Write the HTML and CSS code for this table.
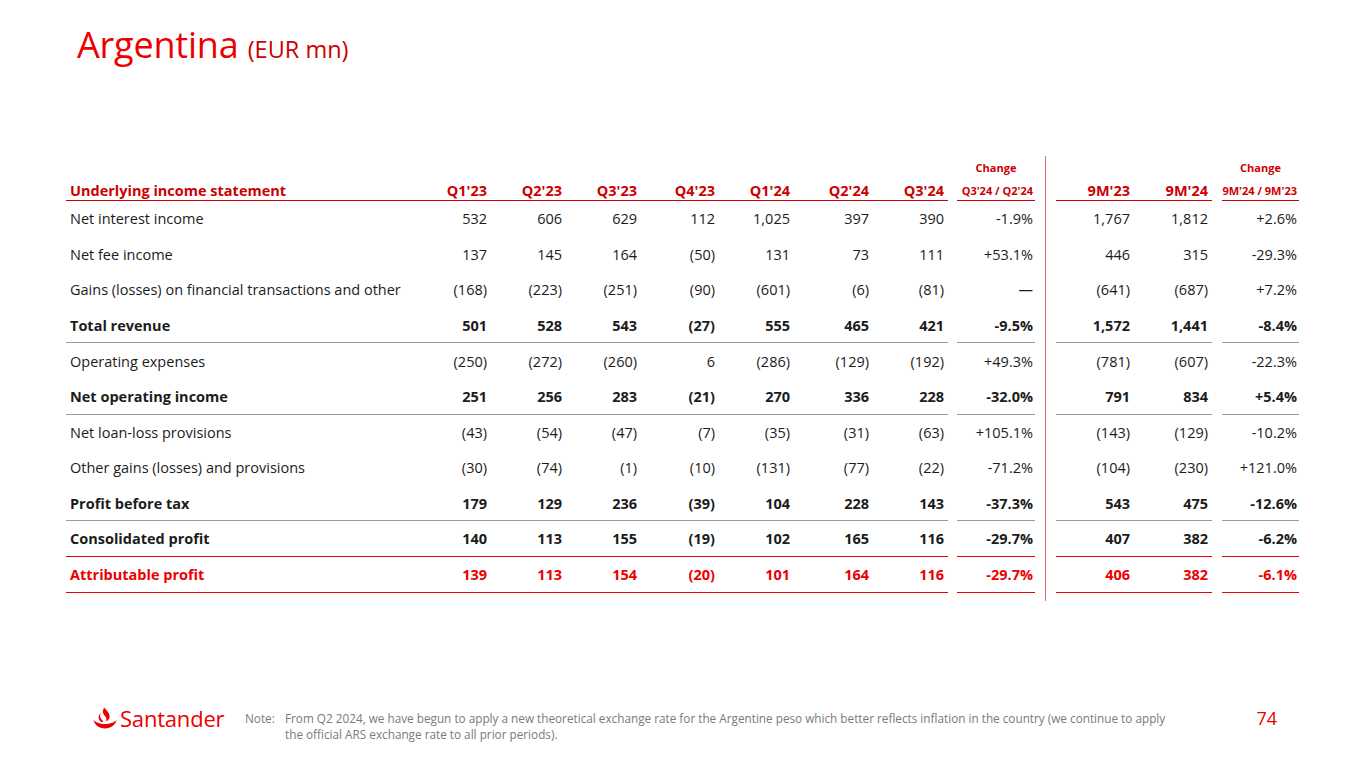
FILE: index.html
```html
<!DOCTYPE html>
<html lang="en">
<head>
<meta charset="utf-8">
<title>Argentina (EUR mn)</title>
<link rel="stylesheet" href="styles.css">
</head>
<body>
<div class="page">
  <h1 class="title">Argentina <span class="unit">(EUR mn)</span></h1>

  <div class="tbl">
    <div class="divider"></div>

    <div class="row top">
      <div class="c"></div><div class="c"></div><div class="c"></div><div class="c"></div><div class="c"></div><div class="c"></div><div class="c"></div><div class="c"></div>
      <div class="sp"></div>
      <div class="c chg ctr">Change</div>
      <div class="c"></div><div class="c"></div>
      <div class="sp"></div>
      <div class="c chg ctr">Change</div>
    </div>

    <div class="row head">
      <div class="c lbl">Underlying income statement</div>
      <div class="c">Q1'23</div><div class="c">Q2'23</div><div class="c">Q3'23</div><div class="c">Q4'23</div><div class="c">Q1'24</div><div class="c">Q2'24</div><div class="c">Q3'24</div>
      <div class="sp"></div>
      <div class="c chg sub">Q3'24 / Q2'24</div>
      <div class="c">9M'23</div><div class="c">9M'24</div>
      <div class="sp"></div>
      <div class="c chg sub">9M'24 / 9M'23</div>
    </div>

    <div class="row">
      <div class="c lbl">Net interest income</div>
      <div class="c">532</div><div class="c">606</div><div class="c">629</div><div class="c">112</div><div class="c">1,025</div><div class="c">397</div><div class="c">390</div>
      <div class="sp"></div><div class="c chg">-1.9%</div>
      <div class="c">1,767</div><div class="c">1,812</div>
      <div class="sp"></div><div class="c chg">+2.6%</div>
    </div>

    <div class="row">
      <div class="c lbl">Net fee income</div>
      <div class="c">137</div><div class="c">145</div><div class="c">164</div><div class="c">(50)</div><div class="c">131</div><div class="c">73</div><div class="c">111</div>
      <div class="sp"></div><div class="c chg">+53.1%</div>
      <div class="c">446</div><div class="c">315</div>
      <div class="sp"></div><div class="c chg">-29.3%</div>
    </div>

    <div class="row">
      <div class="c lbl">Gains (losses) on financial transactions and other</div>
      <div class="c">(168)</div><div class="c">(223)</div><div class="c">(251)</div><div class="c">(90)</div><div class="c">(601)</div><div class="c">(6)</div><div class="c">(81)</div>
      <div class="sp"></div><div class="c chg">—</div>
      <div class="c">(641)</div><div class="c">(687)</div>
      <div class="sp"></div><div class="c chg">+7.2%</div>
    </div>

    <div class="row bold line">
      <div class="c lbl">Total revenue</div>
      <div class="c">501</div><div class="c">528</div><div class="c">543</div><div class="c">(27)</div><div class="c">555</div><div class="c">465</div><div class="c">421</div>
      <div class="sp"></div><div class="c chg">-9.5%</div>
      <div class="c">1,572</div><div class="c">1,441</div>
      <div class="sp"></div><div class="c chg">-8.4%</div>
    </div>

    <div class="row">
      <div class="c lbl">Operating expenses</div>
      <div class="c">(250)</div><div class="c">(272)</div><div class="c">(260)</div><div class="c">6</div><div class="c">(286)</div><div class="c">(129)</div><div class="c">(192)</div>
      <div class="sp"></div><div class="c chg">+49.3%</div>
      <div class="c">(781)</div><div class="c">(607)</div>
      <div class="sp"></div><div class="c chg">-22.3%</div>
    </div>

    <div class="row bold line">
      <div class="c lbl">Net operating income</div>
      <div class="c">251</div><div class="c">256</div><div class="c">283</div><div class="c">(21)</div><div class="c">270</div><div class="c">336</div><div class="c">228</div>
      <div class="sp"></div><div class="c chg">-32.0%</div>
      <div class="c">791</div><div class="c">834</div>
      <div class="sp"></div><div class="c chg">+5.4%</div>
    </div>

    <div class="row">
      <div class="c lbl">Net loan-loss provisions</div>
      <div class="c">(43)</div><div class="c">(54)</div><div class="c">(47)</div><div class="c">(7)</div><div class="c">(35)</div><div class="c">(31)</div><div class="c">(63)</div>
      <div class="sp"></div><div class="c chg">+105.1%</div>
      <div class="c">(143)</div><div class="c">(129)</div>
      <div class="sp"></div><div class="c chg">-10.2%</div>
    </div>

    <div class="row">
      <div class="c lbl">Other gains (losses) and provisions</div>
      <div class="c">(30)</div><div class="c">(74)</div><div class="c">(1)</div><div class="c">(10)</div><div class="c">(131)</div><div class="c">(77)</div><div class="c">(22)</div>
      <div class="sp"></div><div class="c chg">-71.2%</div>
      <div class="c">(104)</div><div class="c">(230)</div>
      <div class="sp"></div><div class="c chg">+121.0%</div>
    </div>

    <div class="row bold line">
      <div class="c lbl">Profit before tax</div>
      <div class="c">179</div><div class="c">129</div><div class="c">236</div><div class="c">(39)</div><div class="c">104</div><div class="c">228</div><div class="c">143</div>
      <div class="sp"></div><div class="c chg">-37.3%</div>
      <div class="c">543</div><div class="c">475</div>
      <div class="sp"></div><div class="c chg">-12.6%</div>
    </div>

    <div class="row bold redline">
      <div class="c lbl">Consolidated profit</div>
      <div class="c">140</div><div class="c">113</div><div class="c">155</div><div class="c">(19)</div><div class="c">102</div><div class="c">165</div><div class="c">116</div>
      <div class="sp"></div><div class="c chg">-29.7%</div>
      <div class="c">407</div><div class="c">382</div>
      <div class="sp"></div><div class="c chg">-6.2%</div>
    </div>

    <div class="row bold red redline">
      <div class="c lbl">Attributable profit</div>
      <div class="c">139</div><div class="c">113</div><div class="c">154</div><div class="c">(20)</div><div class="c">101</div><div class="c">164</div><div class="c">116</div>
      <div class="sp"></div><div class="c chg">-29.7%</div>
      <div class="c">406</div><div class="c">382</div>
      <div class="sp"></div><div class="c chg">-6.1%</div>
    </div>
  </div>

  <footer class="footer">
    <div class="logo">
      <svg class="flame" viewBox="0 0 24 22" width="24" height="22" aria-hidden="true">
        <path fill="#ec0000" d="M11.2 0.5 C13.6 3.6 17.2 6.2 16.6 10.2 C16.3 12.3 14.8 13.6 13 14.2 C13.8 12.4 13.4 10.8 12 9 C10.4 7 9.4 5.6 9.9 3.2 Z"/>
        <path fill="#ec0000" d="M8.4 5.6 C6.6 7.6 6.4 10.2 8.4 12.2 C9.6 13.4 10.3 14.2 10.1 15.4 C7.4 14.8 5.6 13 5.6 10.4 C5.6 8.4 6.7 6.8 8.4 5.6 Z"/>
        <path fill="#ec0000" d="M0.4 12.8 C1.4 17.8 6 21.4 12 21.4 C18 21.4 22.6 17.8 23.6 12.8 C21.6 15.4 17.4 17 12 17 C6.6 17 2.4 15.4 0.4 12.8 Z"/>
      </svg>
      <span class="brand">Santander</span>
    </div>
    <div class="note-label">Note:</div>
    <div class="note-text">From Q2 2024, we have begun to apply a new theoretical exchange rate for the Argentine peso which better reflects inflation in the country (we continue to apply the official ARS exchange rate to all prior periods).</div>
    <div class="pagenum">74</div>
  </footer>
</div>
</body>
</html>
```

FILE: styles.css
```css
html, body {
  margin: 0;
  padding: 0;
  background: #ffffff;
}

body {
  font-family: "Open Sans", "Noto Sans", "Liberation Sans", sans-serif;
  color: #1c1c1c;
}

.page {
  width: 1365px;
  height: 768px;
  display: flex;
  flex-direction: column;
  box-sizing: border-box;
  overflow: hidden;
}

.title {
  margin: 0;
  padding: 20px 0 0 77px;
  height: 48px;
  font-size: 36px;
  line-height: 50px;
  font-weight: 400;
  color: #ec0000;
  letter-spacing: -0.2px;
}

.unit {
  font-size: 23.5px;
  color: #cc0000;
  letter-spacing: 0;
}

.tbl {
  margin: 88px 0 0 66px;
  display: grid;
  grid-template-columns: 349px 76px 75px 75px 78px 75px 79px 75px 9px 78px 21px 78px 78px 10px 77px;
  grid-template-rows: 21px 24px repeat(11, 35.6px) 8px;
  font-size: 14.5px;
}

.divider {
  grid-column: 11;
  grid-row: 1 / -1;
  justify-self: center;
  width: 1px;
  background: #d86a6a;
}

.row {
  display: contents;
}

.c {
  display: flex;
  align-items: center;
  justify-content: flex-end;
  padding-right: 4px;
  white-space: nowrap;
  box-sizing: border-box;
}

.c.chg {
  padding-right: 2px;
}

.c.lbl {
  justify-content: flex-start;
  padding-left: 4px;
}

.top .c {
  font-size: 11px;
  font-weight: 700;
  color: #cc0000;
  align-items: flex-end;
  padding-bottom: 2px;
}

.top .c.ctr {
  justify-content: center;
  padding-right: 0;
}

.head .c {
  font-weight: 700;
  color: #cc0000;
  border-bottom: 1px solid #cc0000;
  padding-top: 3px;
}

.head .c.sub {
  font-size: 11px;
  overflow: visible;
}

.bold .c {
  font-weight: 700;
}

.red .c {
  color: #ec0000;
}

.line .c {
  border-bottom: 1px solid #9a9a9a;
}

.redline .c {
  border-bottom: 1px solid #ec0000;
}

.footer {
  margin-top: auto;
  display: flex;
  align-items: flex-start;
  padding: 0 88px 26px 93px;
  font-size: 11.75px;
  line-height: 16px;
  color: #7a7a7a;
}

.logo {
  width: 152px;
  display: flex;
  align-items: center;
  gap: 3px;
  margin-top: -4px;
}

.flame {
  display: block;
}

.brand {
  font-size: 22px;
  line-height: 24px;
  color: #ec0000;
  font-weight: 500;
  letter-spacing: -0.2px;
}

.note-label {
  width: 40px;
}

.note-text {
  width: 892px;
}

.pagenum {
  margin-left: auto;
  font-size: 18px;
  line-height: 16px;
  color: #ec0000;
}
```
